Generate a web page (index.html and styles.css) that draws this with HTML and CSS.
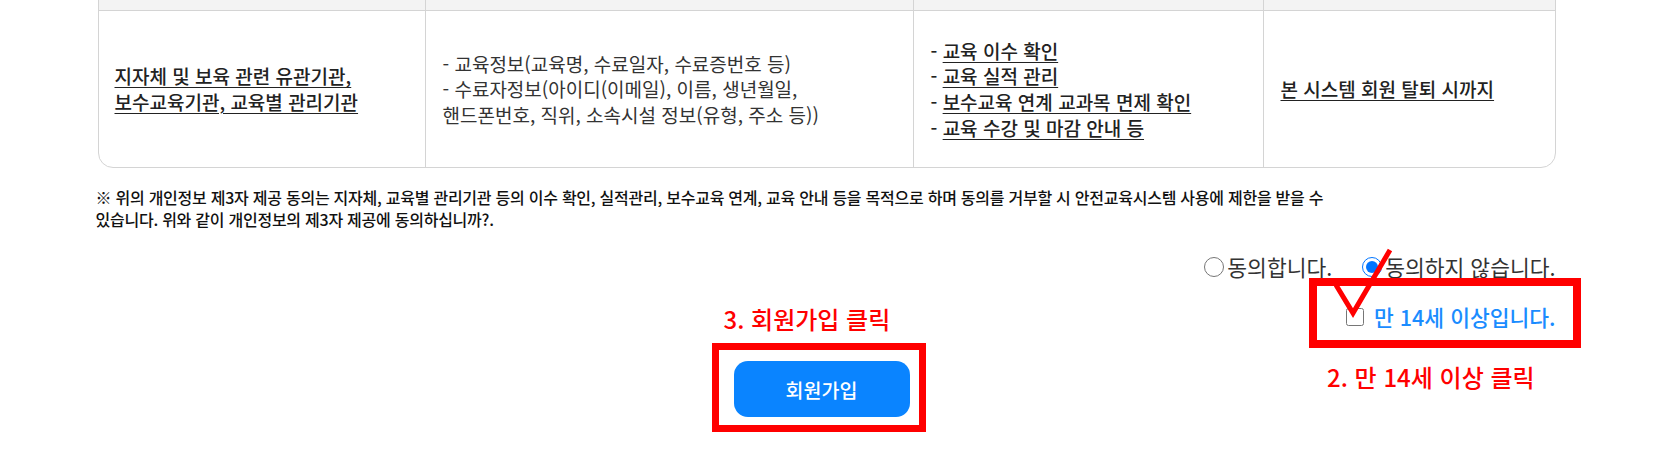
FILE: index.html
```html
<!DOCTYPE html>
<html lang="ko">
<head>
    <meta charset="UTF-8">
    <meta name="viewport" content="width=device-width, initial-scale=1.0">
    <title>회원가입 - 개인정보 제3자 제공 동의</title>
    <link rel="stylesheet" href="styles.css">
</head>
<body>

<div class="page">

    <div class="terms">
        <table>
            <colgroup>
                <col class="col-who">
                <col class="col-items">
                <col class="col-purpose">
                <col class="col-period">
            </colgroup>
            <thead>
                <tr>
                    <th></th>
                    <th></th>
                    <th></th>
                    <th></th>
                </tr>
            </thead>
            <tbody>
                <tr>
                    <td class="strong"><u>지자체 및 보육 관련 유관기관,<br>보수교육기관, 교육별 관리기관</u></td>
                    <td>- 교육정보(교육명, 수료일자, 수료증번호 등)<br>- 수료자정보(아이디(이메일), 이름, 생년월일,<br>핸드폰번호, 직위, 소속시설 정보(유형, 주소 등))</td>
                    <td class="strong">
                        - <u>교육 이수 확인</u><br>
                        - <u>교육 실적 관리</u><br>
                        - <u>보수교육 연계 교과목 면제 확인</u><br>
                        - <u>교육 수강 및 마감 안내 등</u>
                    </td>
                    <td class="strong"><u>본 시스템 회원 탈퇴 시까지</u></td>
                </tr>
            </tbody>
        </table>
    </div>

    <p class="note">※ 위의 개인정보 제3자 제공 동의는 지자체, 교육별 관리기관 등의 이수 확인, 실적관리, 보수교육 연계, 교육 안내 등을 목적으로 하며 동의를 거부할 시 안전교육시스템 사용에 제한을 받을 수<br>있습니다. 위와 같이 개인정보의 제3자 제공에 동의하십니까?.</p>

    <div class="agree">
        <label><input type="radio" name="agree3rd" value="Y">동의합니다.</label>
        <label><input type="radio" name="agree3rd" value="N" checked>동의하지 않습니다.</label>
    </div>

    <div class="bottom">
        <div class="join">
            <div class="hint hint-join">3. 회원가입 클릭</div>
            <div class="mark-box join-box">
                <button type="button" class="btn-join">회원가입</button>
            </div>
        </div>

        <div class="age">
            <div class="mark-box age-box">
                <label class="age-check"><input type="checkbox" name="over14">만 14세 이상입니다.</label>
                <!-- annotation check mark -->
                <svg class="tick" width="70" height="75" viewBox="0 0 70 75">
                    <polyline points="10,40 27,68 64,5" fill="none" stroke="#ff0000" stroke-width="5"/>
                </svg>
            </div>
            <div class="hint hint-age">2. 만 14세 이상 클릭</div>
        </div>
    </div>

</div>

</body>
</html>
```

FILE: styles.css
```css
body {
    margin: 0;
    padding: 0;
    background-color: #fff;
    font-family: "Noto Sans CJK KR", "Noto Sans", sans-serif;
    color: #333;
    overflow: hidden;
}

.page {
    width: 1462px;
    margin: -38px auto 0;
}

/* table */
.terms {
    width: 1456px;
    margin: 0 auto;
    border: 1px solid #d4d4d4;
    border-radius: 15px;
    overflow: hidden;
}

table {
    width: 100%;
    border-collapse: separate;
    border-spacing: 0;
    table-layout: fixed;
}

.col-who { width: 326px; }
.col-items { width: 488px; }
.col-purpose { width: 350px; }
.col-period { width: 292px; }

th {
    height: 47px;
    padding: 0;
    background-color: #f3f3f3;
    border-bottom: 1px solid #d4d4d4;
    border-left: 1px solid #d4d4d4;
}

td {
    height: 156px;
    padding: 0 8px 0 17px;
    border-left: 1px solid #d4d4d4;
    vertical-align: middle;
    text-align: left;
    font-size: 19px;
    line-height: 25.6px;
    color: #333;
}

th:first-child,
td:first-child {
    border-left: none;
}

td:first-child {
    padding-left: 16px;
}

td.strong {
    color: #222;
    font-weight: 500;
}

td u {
    text-underline-offset: 3px;
}

/* note */
.note {
    margin: 18px 0 0;
    font-size: 16px;
    letter-spacing: -0.25px;
    line-height: 22px;
    font-weight: 500;
    color: #111;
}

/* radios */
.agree {
    display: flex;
    justify-content: flex-end;
    gap: 30px;
    margin-top: 27px;
    padding-right: 2px;
    font-size: 21.5px;
    line-height: 20px;
    color: #333;
}

.agree label {
    display: flex;
    align-items: center;
}

.agree input {
    width: 20px;
    height: 20px;
    margin: 0 3px 0 0;
}

/* bottom area */
.bottom {
    display: grid;
    grid-template-columns: 1fr auto 1fr;
    align-items: start;
}

.join {
    grid-column: 2;
    display: flex;
    flex-direction: column;
    align-items: flex-start;
    padding-top: 27px;
    margin-right: 16px;
}

.age {
    grid-column: 3;
    justify-self: end;
    display: flex;
    flex-direction: column;
    align-items: flex-start;
    margin-right: -23px;
    margin-top: 1px;
}

.hint {
    font-size: 24px;
    line-height: 30px;
    font-weight: 500;
    color: #ff0000;
    white-space: nowrap;
}

.hint-join {
    margin-left: 12px;
}

.hint-age {
    margin: 14px 0 0 18px;
}

.mark-box {
    border: 8px solid #ff0000;
}

.join-box {
    margin-top: 9px;
    border-width: 7px;
    padding: 11px 9px 8px 15px;
}

.btn-join {
    display: block;
    width: 176px;
    height: 56px;
    border: none;
    border-radius: 14px;
    background-color: #0a84ff;
    color: #fff;
    font-family: inherit;
    font-size: 19.5px;
    font-weight: 500;
    cursor: pointer;
}

.age-box {
    position: relative;
    padding: 19px 17px 11px 29px;
}

.age-check {
    display: flex;
    align-items: center;
    gap: 10px;
    font-size: 21.5px;
    line-height: 24px;
    font-weight: 500;
    color: #1a8cff;
    white-space: nowrap;
}

.age-check input {
    width: 18px;
    height: 18px;
    margin: 0;
}

.tick {
    position: absolute;
    left: 9px;
    top: -41px;
}
```
